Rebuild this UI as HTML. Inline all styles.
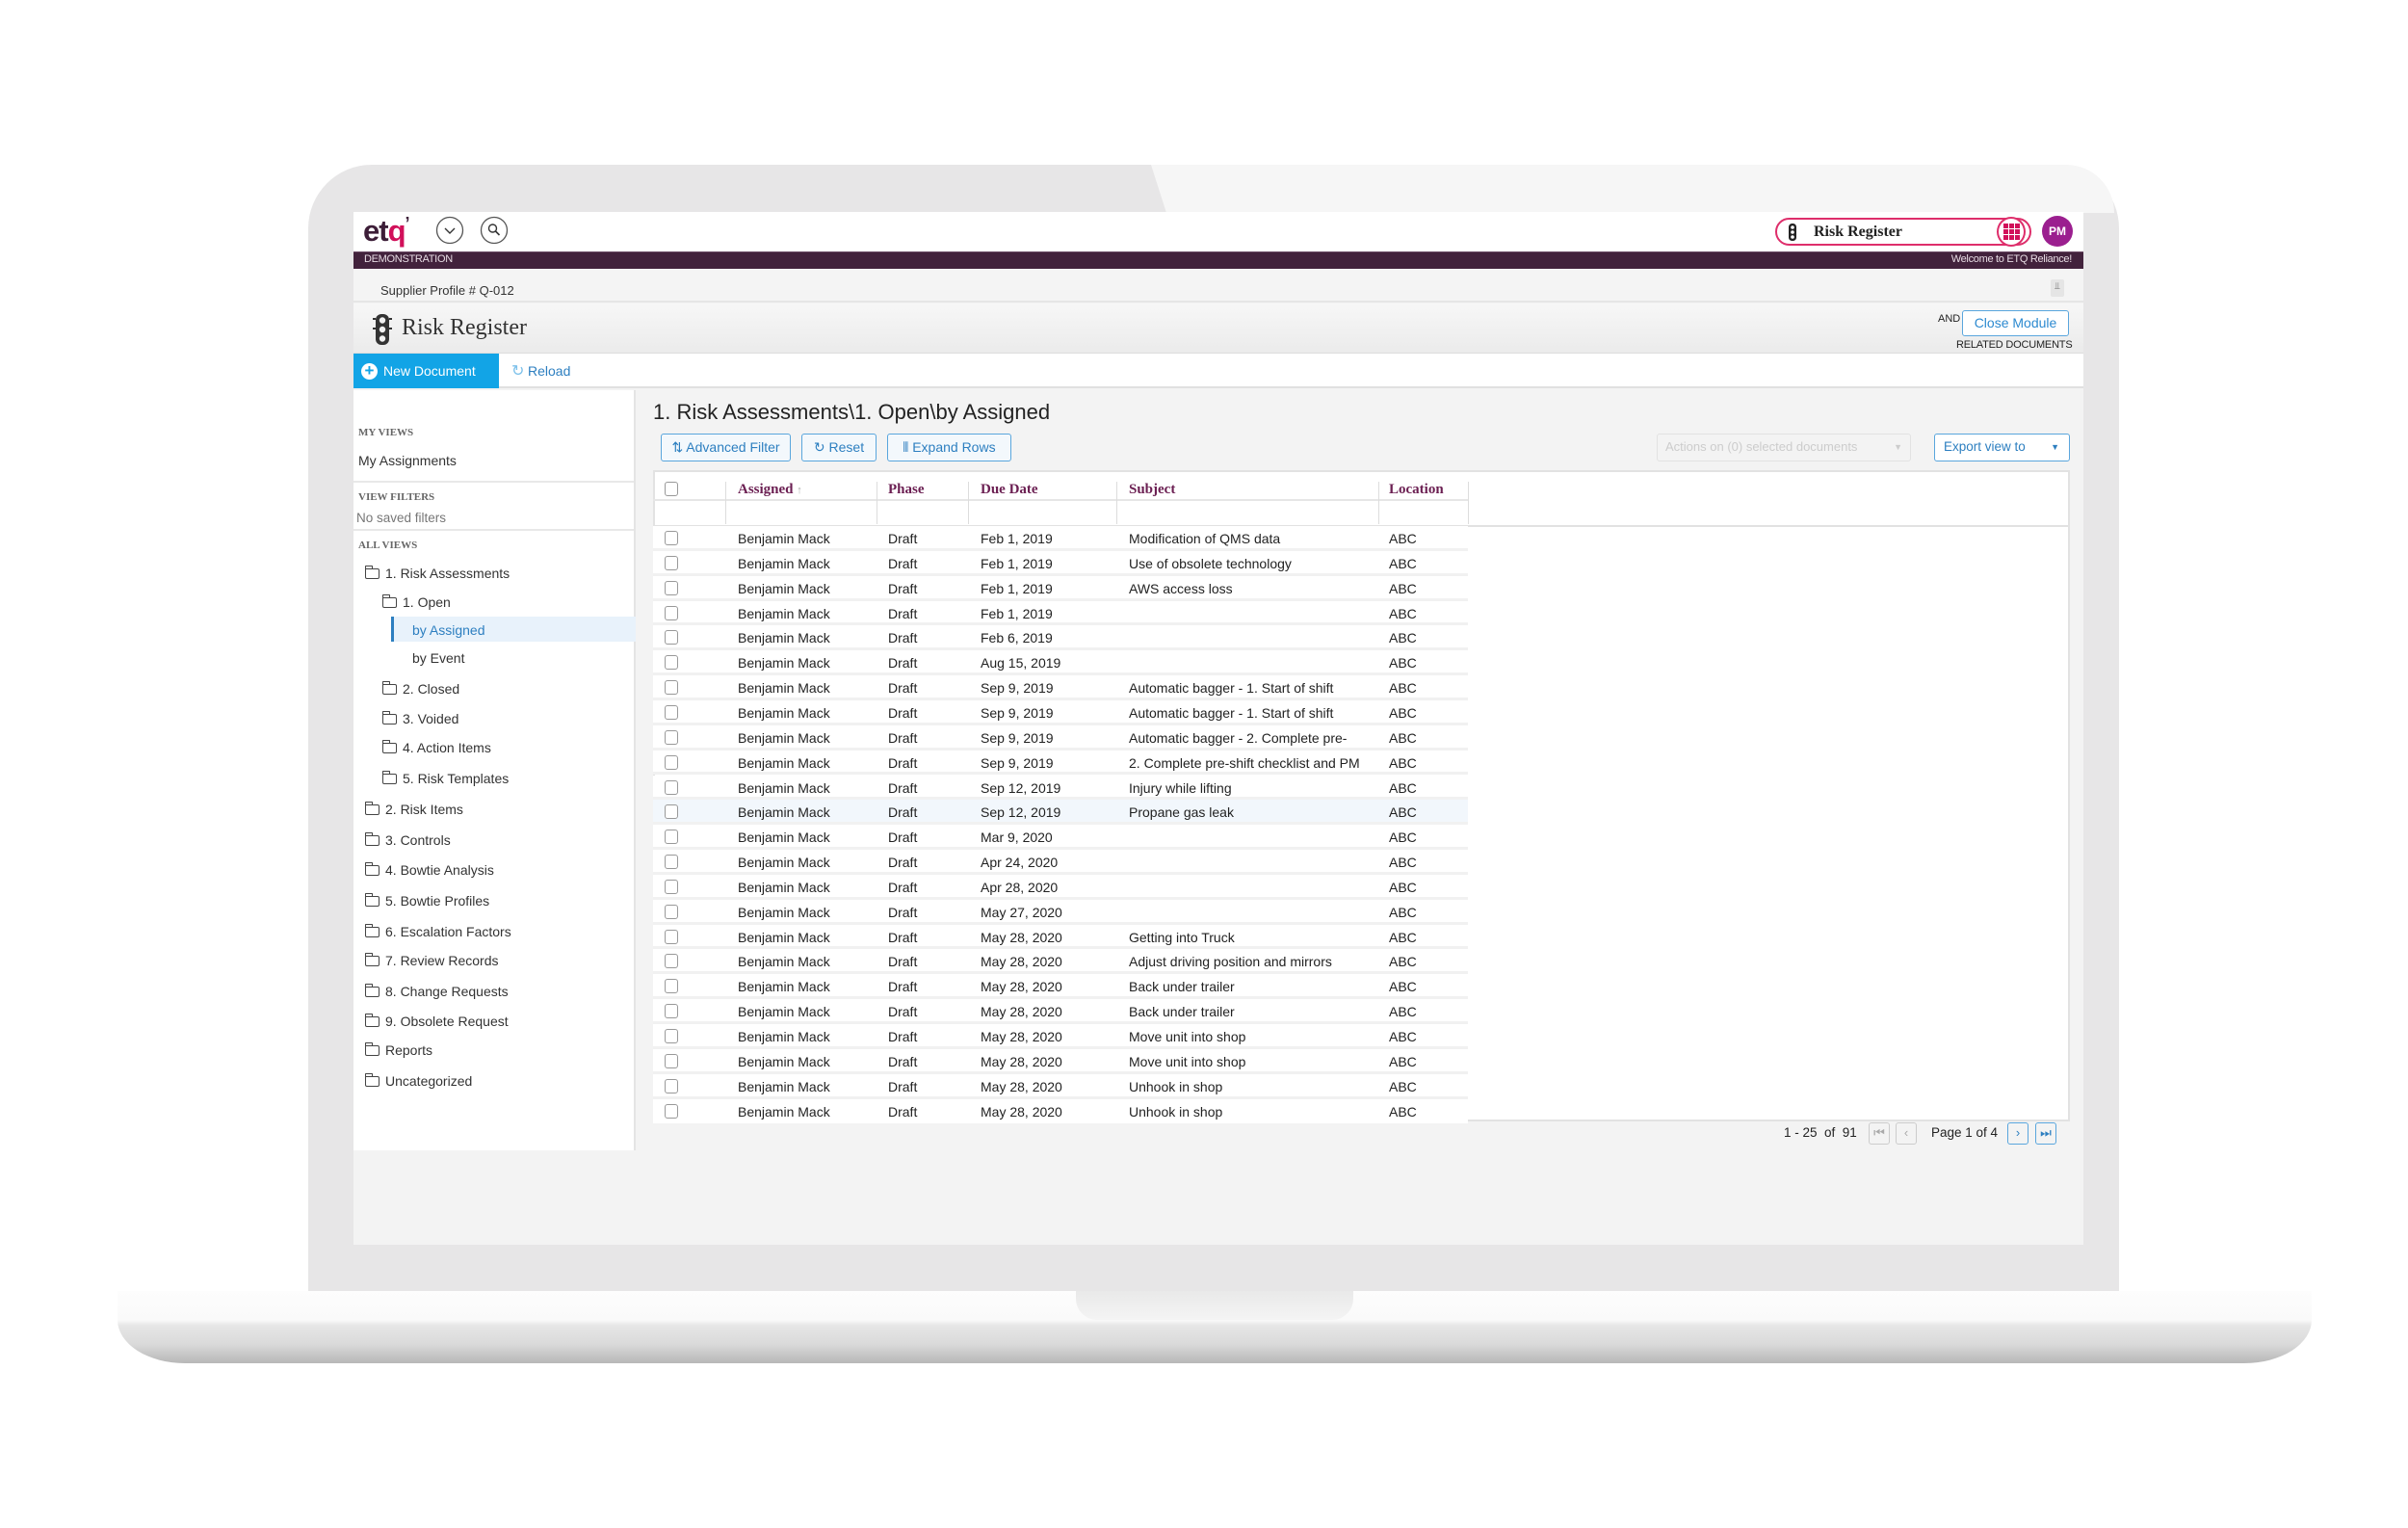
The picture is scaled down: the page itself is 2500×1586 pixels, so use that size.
<!DOCTYPE html>
<html><head><meta charset="utf-8">
<style>
*{box-sizing:border-box;margin:0;padding:0}
body{width:2500px;height:1586px;background:#fff;position:relative;overflow:hidden;font-family:"Liberation Sans",sans-serif;color:#222}
.a{position:absolute}
.lid{left:320px;top:171px;width:1880px;height:1170px;background:#e7e6e7;border-radius:66px 66px 0 0}
.refl{left:1195px;top:171px;width:1000px;height:50px;background:#f6f6f6;clip-path:polygon(0 0,100% 0,100% 100%,16px 100%);border-top-right-radius:60px}
.screen{left:367px;top:220px;width:1796px;height:1072px;background:#f3f3f3;overflow:hidden}
.base{left:122px;top:1340px;width:2278px;height:75px;border-radius:0 0 70px 70px / 0 0 45px 45px;background:linear-gradient(#fdfdfd 0,#fafafa 30px,#e6e6e6 36px,#dadada 55px,#b7b7b7 75px)}
.notch{left:1117px;top:1340px;width:288px;height:30px;background:linear-gradient(#e9e9e9,#f4f4f4);border-radius:0 0 22px 22px}
.s{font-size:14px;color:#333}
.hdr{font-family:"Liberation Serif",serif;font-weight:bold;font-size:15px;color:#6b1f52}
.row{position:absolute;left:311px;width:846px;height:25.85px;background:#fff;border-bottom:3px solid #f1f1f1;font-size:14px;color:#222}
.row span{position:absolute;top:5px}
.cb{position:absolute;width:14px;height:15px;border:1.5px solid #999;border-radius:3px;background:#fff}
.fi{position:absolute;height:20px;border:1px solid #ccc;background:#fff;top:522px}
.tri{position:absolute;top:522px;font-size:12px;color:#888}
.btn{position:absolute;top:450px;height:29px;border:1.5px solid #5aa6dd;border-radius:3px;background:#f3f8fc;color:#2d7fc0;font-size:14px;line-height:26px;text-align:center}
.pg{position:absolute;top:1165px;width:22px;height:23px;border:1.5px solid #ccc;border-radius:3px;font-size:13px;text-align:center;line-height:20px;color:#aaa}
.fo{display:inline-block;width:15px;height:11px;border:1.5px solid #444;border-radius:1px 2px 2px 2px;margin-right:6px;vertical-align:-1px;position:relative}
.fo:before{content:"";position:absolute;left:-1.5px;top:-4px;width:6px;height:3px;border:1.5px solid #444;border-bottom:none;border-radius:1px 1px 0 0}
</style></head><body>
<div class="a lid"></div>
<div class="a refl"></div>
<div class="a base"></div>
<div class="a notch"></div>

<div class="a screen">
 <div class="a" style="left:0;top:0;width:1796px;height:41px;background:#fff"></div>
 <div class="a" style="left:10px;top:2px;font-weight:bold;font-size:31px;letter-spacing:-1px;color:#3d1e38">et<span style="color:#d1105a">q</span><span style="font-size:18px;vertical-align:top;color:#3d1e38">&#x2019;</span></div>
 <svg class="a" style="left:85px;top:4px" width="80" height="32" viewBox="0 0 80 32"><circle cx="15" cy="15" r="13.5" fill="none" stroke="#555" stroke-width="1.3"/><path d="M10 13l5 5 5-5" fill="none" stroke="#333" stroke-width="1.4"/><circle cx="61" cy="15" r="13.5" fill="none" stroke="#555" stroke-width="1.3"/><circle cx="59.5" cy="13" r="4" fill="none" stroke="#333" stroke-width="1.4"/><path d="M62.5 16l4 4" stroke="#333" stroke-width="1.6"/></svg>
 <div class="a" style="left:1476px;top:6px;width:266px;height:29px;border:2px solid #de2e6b;border-radius:15px;background:#fff"></div>
 <svg class="a" style="left:1489px;top:12px" width="10" height="18" viewBox="0 0 10 18"><rect x="1" y="0" width="8" height="18" rx="3.5" fill="#222"/><circle cx="5" cy="4" r="1.8" fill="#fff"/><circle cx="5" cy="9" r="1.8" fill="#fff"/><circle cx="5" cy="14" r="1.8" fill="#fff"/></svg>
 <div class="a" style="left:1516px;top:12px;font-family:'Liberation Serif',serif;font-weight:bold;font-size:16px;color:#222">Risk Register</div>
 <div class="a" style="left:1706px;top:5px;width:30px;height:31px;border:2px solid #de2e6b;border-radius:50%;background:#fff"></div>
 <svg class="a" style="left:1713px;top:12px" width="17" height="17"><g fill="#d1105a"><rect x="0" y="0" width="5" height="5"/><rect x="6" y="0" width="5" height="5"/><rect x="12" y="0" width="5" height="5"/><rect x="0" y="6" width="5" height="5"/><rect x="6" y="6" width="5" height="5"/><rect x="12" y="6" width="5" height="5"/><rect x="0" y="12" width="5" height="5"/><rect x="6" y="12" width="5" height="5"/><rect x="12" y="12" width="5" height="5"/></g></svg>
 <div class="a" style="left:1753px;top:4px;width:32px;height:32px;border-radius:50%;background:#9b1f8f;color:#fff;font-size:12px;font-weight:bold;text-align:center;line-height:32px">PM</div>
 <div class="a" style="left:0;top:41px;width:1796px;height:18px;background:#42223c;border-top:1px solid #6a4a64"></div>
 <div class="a" style="left:11px;top:43px;font-size:11px;color:#e6dbe3;letter-spacing:-0.3px">DEMONSTRATION</div>
 <div class="a" style="right:12px;top:43px;font-size:11px;color:#e6dbe3;letter-spacing:-0.3px">Welcome to ETQ Reliance!</div>
 <div class="a" style="left:0;top:59px;width:1796px;height:35px;background:#f4f4f4;border-bottom:2px solid #e6e6e6"></div>
 <div class="a" style="left:28px;top:74px;font-size:13px;color:#333">Supplier Profile # Q-012</div>
 <div class="a" style="left:1762px;top:70px;width:14px;height:18px;background:#e5e5e5;border-radius:2px;font-size:10px;color:#777;text-align:center;line-height:16px">&#x2AEB;</div>
 <div class="a" style="left:0;top:95px;width:1796px;height:52px;background:linear-gradient(#f7f7f7,#ebebeb);border-bottom:1px solid #ddd"></div>
 <svg class="a" style="left:20px;top:105px" width="20" height="34" viewBox="0 0 20 34"><rect x="3" y="1" width="14" height="32" rx="6" fill="#333"/><circle cx="10" cy="7.5" r="3.2" fill="#f1f1f1"/><circle cx="10" cy="17" r="3.2" fill="#f1f1f1"/><circle cx="10" cy="26.5" r="3.2" fill="#f1f1f1"/><path d="M0 6h3M17 6h3M0 16h3M17 16h3" stroke="#333" stroke-width="2"/></svg>
 <div class="a" style="left:50px;top:107px;font-family:'Liberation Serif',serif;font-size:24px;color:#333">Risk Register</div>
 <div class="a" style="left:1645px;top:105px;font-size:11px;color:#222">AND</div>
 <div class="a" style="left:1670px;top:102px;width:111px;height:27px;border:1.5px solid #5aa6dd;border-radius:3px;background:#fff;color:#2d8ad0;font-size:14px;text-align:center;line-height:24px">Close Module</div>
 <div class="a" style="left:1664px;top:132px;font-size:11px;color:#222;letter-spacing:-0.2px">RELATED DOCUMENTS</div>
 <div class="a" style="left:0;top:147px;width:1796px;height:36px;background:#fff;border-bottom:2px solid #e0e0e0"></div>
 <div class="a" style="left:0;top:147px;width:151px;height:36px;background:#12a4e6"></div>
 <div class="a" style="left:8px;top:157px;width:17px;height:17px;border-radius:50%;background:#fff;color:#12a4e6;font-size:17px;font-weight:bold;line-height:16px;text-align:center">+</div>
 <div class="a" style="left:31px;top:157px;font-size:14px;color:#fff">New Document</div>
 <div class="a" style="left:164px;top:155px;font-size:16px;color:#7cc0ea">&#x21BB;</div>
 <div class="a" style="left:181px;top:157px;font-size:14px;color:#2d7fc0">Reload</div>
 <div class="a" style="left:0;top:185px;width:293px;height:789px;background:#fff;border-right:2px solid #e4e4e4"></div>
 <div class="a" style="left:5px;top:223px;font-family:'Liberation Serif',serif;font-weight:bold;font-size:11px;color:#666">MY VIEWS</div>
 <div class="a s" style="left:5px;top:250px">My Assignments</div>
 <div class="a" style="left:0;top:279px;width:291px;height:2px;background:#e8e8e8"></div>
 <div class="a" style="left:5px;top:290px;font-family:'Liberation Serif',serif;font-weight:bold;font-size:11px;color:#666">VIEW FILTERS</div>
 <div class="a" style="left:3px;top:310px;font-size:13.5px;color:#777">No saved filters</div>
 <div class="a" style="left:0;top:329px;width:291px;height:2px;background:#e8e8e8"></div>
 <div class="a" style="left:5px;top:340px;font-family:'Liberation Serif',serif;font-weight:bold;font-size:11px;color:#666">ALL VIEWS</div>
 <div class="a s" style="left:12px;top:367px"><span class="fo"></span>1. Risk Assessments</div>
 <div class="a s" style="left:30px;top:397px"><span class="fo"></span>1. Open</div>
 <div class="a" style="left:39px;top:420px;width:254px;height:26px;background:#e8f2fb;border-left:3px solid #2d7fc0"></div>
 <div class="a s" style="left:61px;top:426px;color:#2d7fc0">by Assigned</div>
 <div class="a s" style="left:61px;top:455px">by Event</div>
 <div class="a s" style="left:30px;top:487px"><span class="fo"></span>2. Closed</div>
 <div class="a s" style="left:30px;top:518px"><span class="fo"></span>3. Voided</div>
 <div class="a s" style="left:30px;top:548px"><span class="fo"></span>4. Action Items</div>
 <div class="a s" style="left:30px;top:580px"><span class="fo"></span>5. Risk Templates</div>
 <div class="a s" style="left:12px;top:612px"><span class="fo"></span>2. Risk Items</div>
 <div class="a s" style="left:12px;top:644px"><span class="fo"></span>3. Controls</div>
 <div class="a s" style="left:12px;top:675px"><span class="fo"></span>4. Bowtie Analysis</div>
 <div class="a s" style="left:12px;top:707px"><span class="fo"></span>5. Bowtie Profiles</div>
 <div class="a s" style="left:12px;top:739px"><span class="fo"></span>6. Escalation Factors</div>
 <div class="a s" style="left:12px;top:769px"><span class="fo"></span>7. Review Records</div>
 <div class="a s" style="left:12px;top:801px"><span class="fo"></span>8. Change Requests</div>
 <div class="a s" style="left:12px;top:832px"><span class="fo"></span>9. Obsolete Request</div>
 <div class="a s" style="left:12px;top:862px"><span class="fo"></span>Reports</div>
 <div class="a s" style="left:12px;top:894px"><span class="fo"></span>Uncategorized</div>
 <div class="a" style="left:311px;top:195px;font-size:22px;color:#222">1. Risk Assessments\1. Open\by Assigned</div>
 <div class="btn" style="left:319px;width:135px;top:230px">&#x21C5; Advanced Filter</div>
 <div class="btn" style="left:465px;width:78px;top:230px">&#x21BB; Reset</div>
 <div class="btn" style="left:554px;width:129px;top:230px">&#x2AF4; Expand Rows</div>
 <div class="a" style="left:1353px;top:230px;width:264px;height:29px;border:1.5px solid #e2e2e2;border-radius:3px;font-size:13px;color:#ccc;line-height:26px;padding-left:8px">Actions on (0) selected documents <span style="float:right;margin-right:8px;font-size:9px">&#x25BC;</span></div>
 <div class="btn" style="left:1641px;width:141px;top:230px;background:#fff;text-align:left;padding-left:9px;font-size:13.5px">Export view to <span style="float:right;margin-right:10px;font-size:9px">&#x25BC;</span></div>
 <div class="a" style="left:311px;top:268px;width:1471px;height:676px;background:#fff;border:2px solid #e2e2e2"></div>
 <div class="a" style="left:311px;top:298px;width:846px;height:2px;background:#e6e6e6"></div>
 <div class="a" style="left:311px;top:325px;width:1471px;height:2px;background:#e2e2e2"></div>
 <div class="cb" style="left:323px;top:280px"></div>
 <div class="a hdr" style="left:399px;top:280px">Assigned <span style="color:#aaa;font-size:11px">&#x2191;</span></div>
 <div class="a hdr" style="left:555px;top:280px">Phase</div>
 <div class="a hdr" style="left:651px;top:280px">Due Date</div>
 <div class="a hdr" style="left:805px;top:280px">Subject</div>
 <div class="a hdr" style="left:1075px;top:280px">Location</div>
 <div class="a" style="left:386px;top:280px;width:1px;height:44px;background:#ddd"></div>
 <div class="a" style="left:543px;top:280px;width:1px;height:44px;background:#ddd"></div>
 <div class="a" style="left:638px;top:280px;width:1px;height:44px;background:#ddd"></div>
 <div class="a" style="left:792px;top:280px;width:1px;height:44px;background:#ddd"></div>
 <div class="a" style="left:1064px;top:280px;width:1px;height:44px;background:#ddd"></div>
 <div class="a" style="left:1157px;top:280px;width:1px;height:44px;background:#ddd"></div>
 <div class="fi" style="left:399px;width:106px"></div><div class="tri" style="left:520px">&#x25BD;</div>
 <div class="fi" style="left:556px;width:47px"></div><div class="tri" style="left:614px">&#x25BD;</div>
 <div class="fi" style="left:651px;width:102px;font-size:13px;color:#888;padding-left:3px;line-height:18px;border-color:#aaa">yyyy-mm-dd</div><div class="a" style="left:733px;top:523px;font-size:13px;color:#3a8ad0;background:#fff">&#x2637;</div><div class="tri" style="left:766px">&#x25BD;</div>
 <div class="fi" style="left:805px;width:222px"></div><div class="tri" style="left:1041px">&#x25BD;</div>
 <div class="fi" style="left:1076px;width:47px"></div><div class="tri" style="left:1136px">&#x25BD;</div>
</div>

<div class="a" style="left:367px;top:220px;width:1796px;height:1072px;overflow:hidden">
 <div style="position:absolute;left:0;top:326px">
 <div class="row" style="top:0"><i class="cb" style="left:12px;top:5px"></i><span style="left:88px">Benjamin Mack</span><span style="left:244px">Draft</span><span style="left:340px">Feb 1, 2019</span><span style="left:494px">Modification of QMS data</span><span style="left:764px">ABC</span></div>
 <div class="row" style="top:25.85px"><i class="cb" style="left:12px;top:5px"></i><span style="left:88px">Benjamin Mack</span><span style="left:244px">Draft</span><span style="left:340px">Feb 1, 2019</span><span style="left:494px">Use of obsolete technology</span><span style="left:764px">ABC</span></div>
 <div class="row" style="top:51.7px"><i class="cb" style="left:12px;top:5px"></i><span style="left:88px">Benjamin Mack</span><span style="left:244px">Draft</span><span style="left:340px">Feb 1, 2019</span><span style="left:494px">AWS access loss</span><span style="left:764px">ABC</span></div>
 <div class="row" style="top:77.55px"><i class="cb" style="left:12px;top:5px"></i><span style="left:88px">Benjamin Mack</span><span style="left:244px">Draft</span><span style="left:340px">Feb 1, 2019</span><span style="left:764px">ABC</span></div>
 <div class="row" style="top:103.4px"><i class="cb" style="left:12px;top:5px"></i><span style="left:88px">Benjamin Mack</span><span style="left:244px">Draft</span><span style="left:340px">Feb 6, 2019</span><span style="left:764px">ABC</span></div>
 <div class="row" style="top:129.25px"><i class="cb" style="left:12px;top:5px"></i><span style="left:88px">Benjamin Mack</span><span style="left:244px">Draft</span><span style="left:340px">Aug 15, 2019</span><span style="left:764px">ABC</span></div>
 <div class="row" style="top:155.1px"><i class="cb" style="left:12px;top:5px"></i><span style="left:88px">Benjamin Mack</span><span style="left:244px">Draft</span><span style="left:340px">Sep 9, 2019</span><span style="left:494px">Automatic bagger - 1. Start of shift</span><span style="left:764px">ABC</span></div>
 <div class="row" style="top:180.95px"><i class="cb" style="left:12px;top:5px"></i><span style="left:88px">Benjamin Mack</span><span style="left:244px">Draft</span><span style="left:340px">Sep 9, 2019</span><span style="left:494px">Automatic bagger - 1. Start of shift</span><span style="left:764px">ABC</span></div>
 <div class="row" style="top:206.8px"><i class="cb" style="left:12px;top:5px"></i><span style="left:88px">Benjamin Mack</span><span style="left:244px">Draft</span><span style="left:340px">Sep 9, 2019</span><span style="left:494px">Automatic bagger - 2. Complete pre-</span><span style="left:764px">ABC</span></div>
 <div class="row" style="top:232.65px"><i class="cb" style="left:12px;top:5px"></i><span style="left:88px">Benjamin Mack</span><span style="left:244px">Draft</span><span style="left:340px">Sep 9, 2019</span><span style="left:494px">2. Complete pre-shift checklist and PM</span><span style="left:764px">ABC</span></div>
 <div class="row" style="top:258.5px"><i class="cb" style="left:12px;top:5px"></i><span style="left:88px">Benjamin Mack</span><span style="left:244px">Draft</span><span style="left:340px">Sep 12, 2019</span><span style="left:494px">Injury while lifting</span><span style="left:764px">ABC</span></div>
 <div class="row" style="top:284.35px;background:#f2f7fc"><i class="cb" style="left:12px;top:5px"></i><span style="left:88px">Benjamin Mack</span><span style="left:244px">Draft</span><span style="left:340px">Sep 12, 2019</span><span style="left:494px">Propane gas leak</span><span style="left:764px">ABC</span></div>
 <div class="row" style="top:310.2px"><i class="cb" style="left:12px;top:5px"></i><span style="left:88px">Benjamin Mack</span><span style="left:244px">Draft</span><span style="left:340px">Mar 9, 2020</span><span style="left:764px">ABC</span></div>
 <div class="row" style="top:336.05px"><i class="cb" style="left:12px;top:5px"></i><span style="left:88px">Benjamin Mack</span><span style="left:244px">Draft</span><span style="left:340px">Apr 24, 2020</span><span style="left:764px">ABC</span></div>
 <div class="row" style="top:361.9px"><i class="cb" style="left:12px;top:5px"></i><span style="left:88px">Benjamin Mack</span><span style="left:244px">Draft</span><span style="left:340px">Apr 28, 2020</span><span style="left:764px">ABC</span></div>
 <div class="row" style="top:387.75px"><i class="cb" style="left:12px;top:5px"></i><span style="left:88px">Benjamin Mack</span><span style="left:244px">Draft</span><span style="left:340px">May 27, 2020</span><span style="left:764px">ABC</span></div>
 <div class="row" style="top:413.6px"><i class="cb" style="left:12px;top:5px"></i><span style="left:88px">Benjamin Mack</span><span style="left:244px">Draft</span><span style="left:340px">May 28, 2020</span><span style="left:494px">Getting into Truck</span><span style="left:764px">ABC</span></div>
 <div class="row" style="top:439.45px"><i class="cb" style="left:12px;top:5px"></i><span style="left:88px">Benjamin Mack</span><span style="left:244px">Draft</span><span style="left:340px">May 28, 2020</span><span style="left:494px">Adjust driving position and mirrors</span><span style="left:764px">ABC</span></div>
 <div class="row" style="top:465.3px"><i class="cb" style="left:12px;top:5px"></i><span style="left:88px">Benjamin Mack</span><span style="left:244px">Draft</span><span style="left:340px">May 28, 2020</span><span style="left:494px">Back under trailer</span><span style="left:764px">ABC</span></div>
 <div class="row" style="top:491.15px"><i class="cb" style="left:12px;top:5px"></i><span style="left:88px">Benjamin Mack</span><span style="left:244px">Draft</span><span style="left:340px">May 28, 2020</span><span style="left:494px">Back under trailer</span><span style="left:764px">ABC</span></div>
 <div class="row" style="top:517px"><i class="cb" style="left:12px;top:5px"></i><span style="left:88px">Benjamin Mack</span><span style="left:244px">Draft</span><span style="left:340px">May 28, 2020</span><span style="left:494px">Move unit into shop</span><span style="left:764px">ABC</span></div>
 <div class="row" style="top:542.85px"><i class="cb" style="left:12px;top:5px"></i><span style="left:88px">Benjamin Mack</span><span style="left:244px">Draft</span><span style="left:340px">May 28, 2020</span><span style="left:494px">Move unit into shop</span><span style="left:764px">ABC</span></div>
 <div class="row" style="top:568.7px"><i class="cb" style="left:12px;top:5px"></i><span style="left:88px">Benjamin Mack</span><span style="left:244px">Draft</span><span style="left:340px">May 28, 2020</span><span style="left:494px">Unhook in shop</span><span style="left:764px">ABC</span></div>
 <div class="row" style="top:594.55px;border-bottom:none"><i class="cb" style="left:12px;top:5px"></i><span style="left:88px">Benjamin Mack</span><span style="left:244px">Draft</span><span style="left:340px">May 28, 2020</span><span style="left:494px">Unhook in shop</span><span style="left:764px">ABC</span></div>
 </div>
 <div class="a" style="left:1485px;top:948px;font-size:13.5px;color:#222">1 - 25 &nbsp;of &nbsp;91</div>
 <div class="pg" style="left:1573px;top:945px">&#x23EE;</div>
 <div class="pg" style="left:1601px;top:945px">&#x2039;</div>
 <div class="a" style="left:1638px;top:948px;font-size:13.5px;color:#222">Page 1 of 4</div>
 <div class="pg" style="left:1717px;top:945px;border-color:#5aa6dd;color:#2d7fc0">&#x203A;</div>
 <div class="pg" style="left:1746px;top:945px;border-color:#5aa6dd;color:#2d7fc0">&#x23ED;</div>
</div>
</body></html>
